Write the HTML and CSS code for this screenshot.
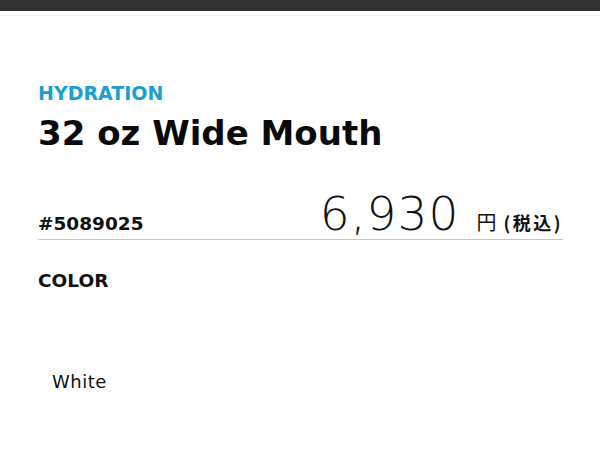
FILE: index.html
```html
<!DOCTYPE html>
<html lang="ja">
<head>
    <meta charset="UTF-8">
    <meta name="viewport" content="width=device-width, initial-scale=1.0">
    <title>32 oz Wide Mouth</title>
    <link rel="stylesheet" href="styles.css">
</head>
<body>
    <div class="topbar"></div>
    <div class="topline"></div>
    <main class="product">
        <p class="category">HYDRATION</p>
        <h1 class="title">32 oz Wide Mouth</h1>
        <div class="price-row">
            <span class="sku">#5089025</span>
            <span class="price">
                <span class="amount">6,930</span>
                <span class="unit">円</span><span class="tax">(税込)</span>
            </span>
        </div>
        <h2 class="option-label">COLOR</h2>
        <div class="swatches">
            <span class="swatch-name">White</span>
        </div>
    </main>
</body>
</html>
```

FILE: styles.css
```css
* {
    margin: 0;
    padding: 0;
    box-sizing: border-box;
}
body {
    font-family: "DejaVu Sans", "Noto Sans CJK JP", sans-serif;
    background: #fff;
    color: #111;
}
.topbar {
    height: 11px;
    background-color: #333;
}
.topline {
    margin-top: 4px;
    height: 1px;
    background-color: #f3f3f3;
}
.product {
    padding: 0 37px 0 38px;
}
.category {
    margin-top: 65px;
    font-size: 19px;
    font-weight: 700;
    line-height: 24px;
    color: #1a9fd0;
}
.title {
    margin-top: 8px;
    font-size: 34px;
    font-weight: 700;
    line-height: 40px;
    color: #0a0a0a;
}
.price-row {
    margin-top: 37px;
    display: flex;
    justify-content: space-between;
    align-items: baseline;
    border-bottom: 1px solid #c8c8c8;
    padding-bottom: 1px;
}
.sku {
    font-size: 18.5px;
    font-weight: 700;
}
.amount {
    font-size: 47px;
    font-weight: 200;
    line-height: 48px;
    letter-spacing: 1px;
    margin-right: 12px;
}
.unit {
    font-family: "Noto Sans CJK JP", sans-serif;
    font-size: 20px;
    margin-right: 7px;
}
.tax {
    font-family: "Noto Sans CJK JP", sans-serif;
    font-size: 18px;
    font-weight: 700;
    letter-spacing: 2.5px;
}
.option-label {
    margin-top: 30px;
    font-size: 18.5px;
    font-weight: 700;
}
.swatches {
    margin-top: 80px;
    padding-left: 14px;
}
.swatch-name {
    font-size: 18px;
    letter-spacing: 0.5px;
}
```
